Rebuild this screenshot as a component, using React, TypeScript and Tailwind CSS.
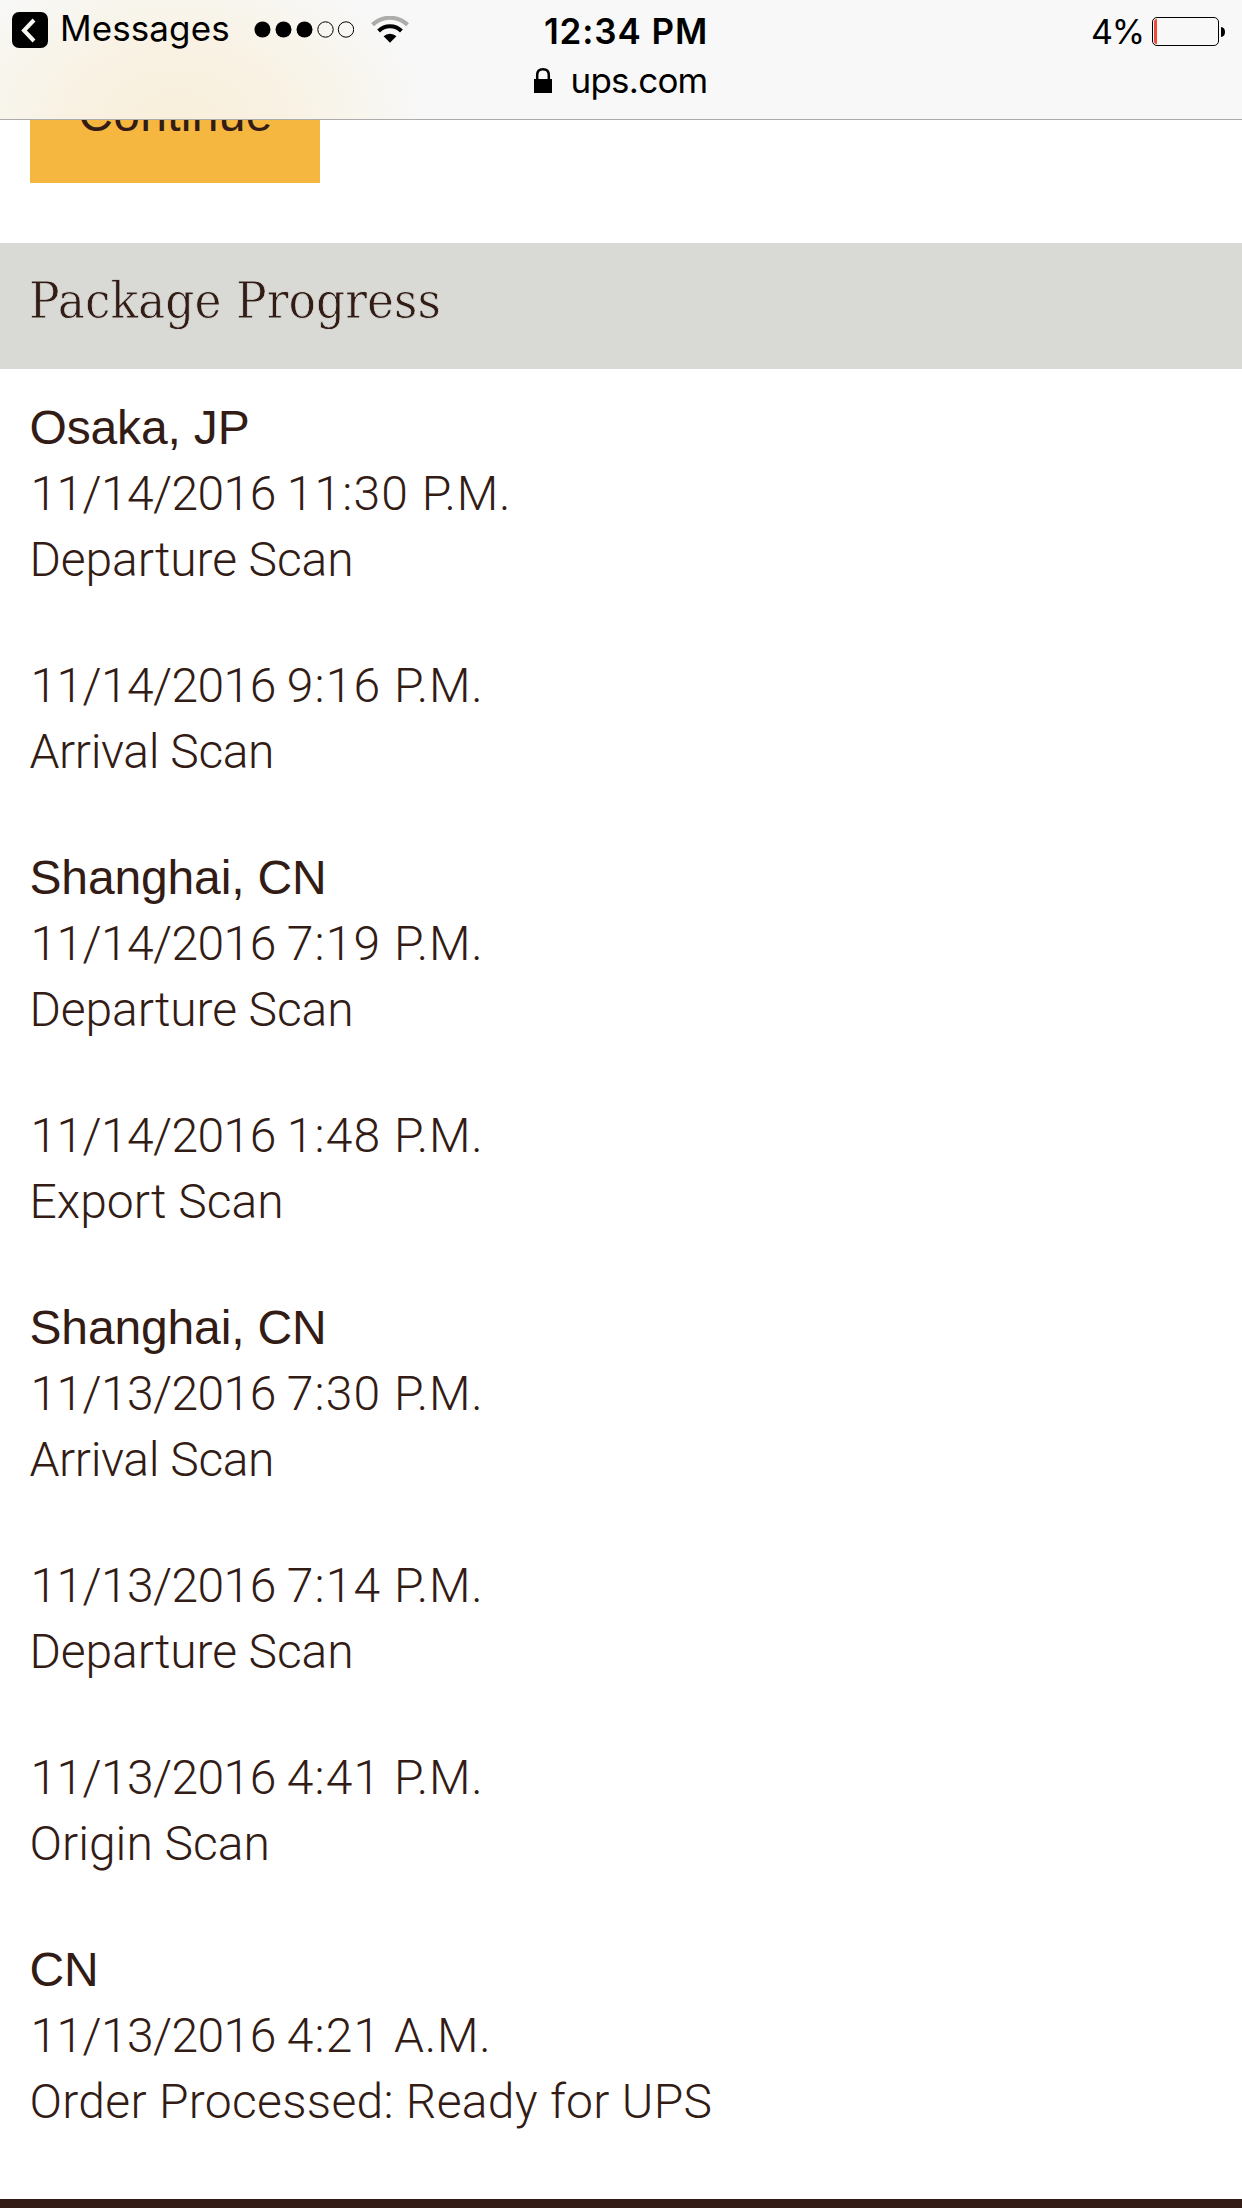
import React from "react";

type Scan = { date: string; time: string; period: string; label: string; tracking: string };
type Stop = { place: string; scans: Scan[] };

const stops: Stop[] = [
  {
    place: "Osaka, JP",
    scans: [
      { date: "11/14/2016", time: "11:30", period: "P.M.", label: "Departure Scan", tracking: "tracking-[-0.1px]" },
      { date: "11/14/2016", time: "9:16", period: "P.M.", label: "Arrival Scan", tracking: "tracking-[-0.4px]" },
    ],
  },
  {
    place: "Shanghai, CN",
    scans: [
      { date: "11/14/2016", time: "7:19", period: "P.M.", label: "Departure Scan", tracking: "tracking-[-0.1px]" },
      { date: "11/14/2016", time: "1:48", period: "P.M.", label: "Export Scan", tracking: "tracking-[0px]" },
    ],
  },
  {
    place: "Shanghai, CN",
    scans: [
      { date: "11/13/2016", time: "7:30", period: "P.M.", label: "Arrival Scan", tracking: "tracking-[-0.4px]" },
      { date: "11/13/2016", time: "7:14", period: "P.M.", label: "Departure Scan", tracking: "tracking-[-0.1px]" },
      { date: "11/13/2016", time: "4:41", period: "P.M.", label: "Origin Scan", tracking: "tracking-[0px]" },
    ],
  },
  {
    place: "CN",
    scans: [
      {
        date: "11/13/2016",
        time: "4:21",
        period: "A.M.",
        label: "Order Processed: Ready for UPS",
        tracking: "tracking-[0.3px]",
      },
    ],
  },
];

function Wifi() {
  return (
    <svg width="38" height="28" viewBox="0 0 38 28" fill="none" className="ml-[17px] block">
      <path d="M1.5 8.8A25 25 0 0 1 36.5 8.8" stroke="#adadab" strokeWidth="4" />
      <path d="M7.6 15A16.2 16.2 0 0 1 30.4 15" stroke="#000" strokeWidth="4" />
      <path d="M12.6 20.2A9.3 9.3 0 0 1 25.4 20.2L19 26.8Z" fill="#000" />
    </svg>
  );
}

function StatusBar() {
  return (
    <header className="relative z-10 h-[120px] shrink-0 border-b border-[#acacac] bg-[#f8f8f8] bg-[radial-gradient(ellipse_250px_165px_at_175px_120px,#f8efdb_0%,#f9f1e2_40%,#f8f5ec_70%,#f8f8f8_100%)] font-['Inter',sans-serif] text-black">
      <div className="grid h-[59px] grid-cols-3">
        <div className="flex items-center pl-3">
          <svg width="36" height="36" viewBox="0 0 36 36" className="block shrink-0">
            <rect width="36" height="36" rx="7" />
            <path d="M22 8L12 18.5L22 29" fill="none" stroke="#f8f7f0" strokeWidth="4" />
          </svg>
          <span className="ml-[12px] w-[194px] shrink-0 pb-[2px] text-[35px] tracking-[0.1px]">Messages</span>
          <svg width="100" height="17" viewBox="0 0 100 17" className="block shrink-0">
            <circle cx="8.500" cy="8.500" r="8" />
            <circle cx="29.500" cy="8.500" r="8" />
            <circle cx="50.500" cy="8.500" r="8" />
            <circle cx="71.500" cy="8.500" r="7.700" fill="none" stroke="#000" />
            <circle cx="92" cy="8.500" r="7.700" fill="none" stroke="#000" />
          </svg>
          <Wifi />
        </div>
        <div className="flex items-center justify-center pl-[10px] pt-[3px]">
          <span className="text-[35px] font-semibold tracking-[0.9px]">12:34 PM</span>
        </div>
        <div className="flex items-center justify-end pr-[17px] pt-[3px]">
          <span className="mr-[8px] text-[34px] tracking-[-1.2px]">4%</span>
          <svg width="73" height="29" viewBox="0 0 73 29" className="block">
            <rect x="0.5" y="0.5" width="66" height="28" rx="4.5" fill="none" stroke="#000" />
            <path d="M4.500 2H5V27H4.500Q2 27 2 24V5Q2 2 5 2Z" fill="#ef4b3c" />
            <path d="M69 10Q73 10.500 73 15T69 20Z" />
          </svg>
        </div>
      </div>
      <div className="flex h-[42px] items-center justify-center">
        <svg width="18" height="25" viewBox="0 0 18 25" className="mr-[18px] block">
          <path d="M3.200 12V7Q3.200 1.300 9 1.300T14.800 7V12" fill="none" stroke="#000" strokeWidth="2.500" />
          <rect y="11" width="18" height="14" />
        </svg>
        <span className="pt-px text-[35px] tracking-[-0.75px]">ups.com</span>
      </div>
    </header>
  );
}

export default function App() {
  return (
    <div className="flex h-[2208px] w-[1242px] flex-col overflow-hidden bg-white font-['Liberation_Sans',Arial,sans-serif] text-[#321c15]">
      <StatusBar />
      <div className="-mt-[57px] ml-[30px] flex h-[120px] w-[290px] shrink-0 items-center justify-center bg-[#f5b73f] pb-[16px] pl-px text-[48px] tracking-[0.3px]">
        Continue
      </div>
      <h2 className="mt-[60px] h-[126px] shrink-0 bg-[#d9dad5] pl-[29px] pt-[25px] font-['DejaVu_Serif',serif] text-[51px] leading-[66px] [-webkit-text-stroke:0.8px_#d9dad5]">
        <span className="inline-block origin-left scale-x-[0.895]">Package Progress</span>
      </h2>
      <main className="flex flex-col gap-[60px] pl-[29.5px] pt-[26px] text-[48px] leading-[66px]">
        {stops.map((stop, i) => (
          <section key={i}>
            <h3 className="tracking-[-0.15px]">{stop.place}</h3>
            <div className="flex flex-col gap-[60px] font-['Roboto',sans-serif] font-light">
              {stop.scans.map((scan) => (
                <div key={scan.time}>
                  <p className="pl-px">
                    <span className="tracking-[-0.6px]">{scan.date} </span>
                    <span className="tracking-[1.1px]">{scan.time} </span>
                    <span className="tracking-[0.8px]">{scan.period}</span>
                  </p>
                  <p className={scan.tracking}>{scan.label}</p>
                </div>
              ))}
            </div>
          </section>
        ))}
      </main>
      <footer className="mt-auto h-[9px] shrink-0 bg-[#321c15]" />
    </div>
  );
}
